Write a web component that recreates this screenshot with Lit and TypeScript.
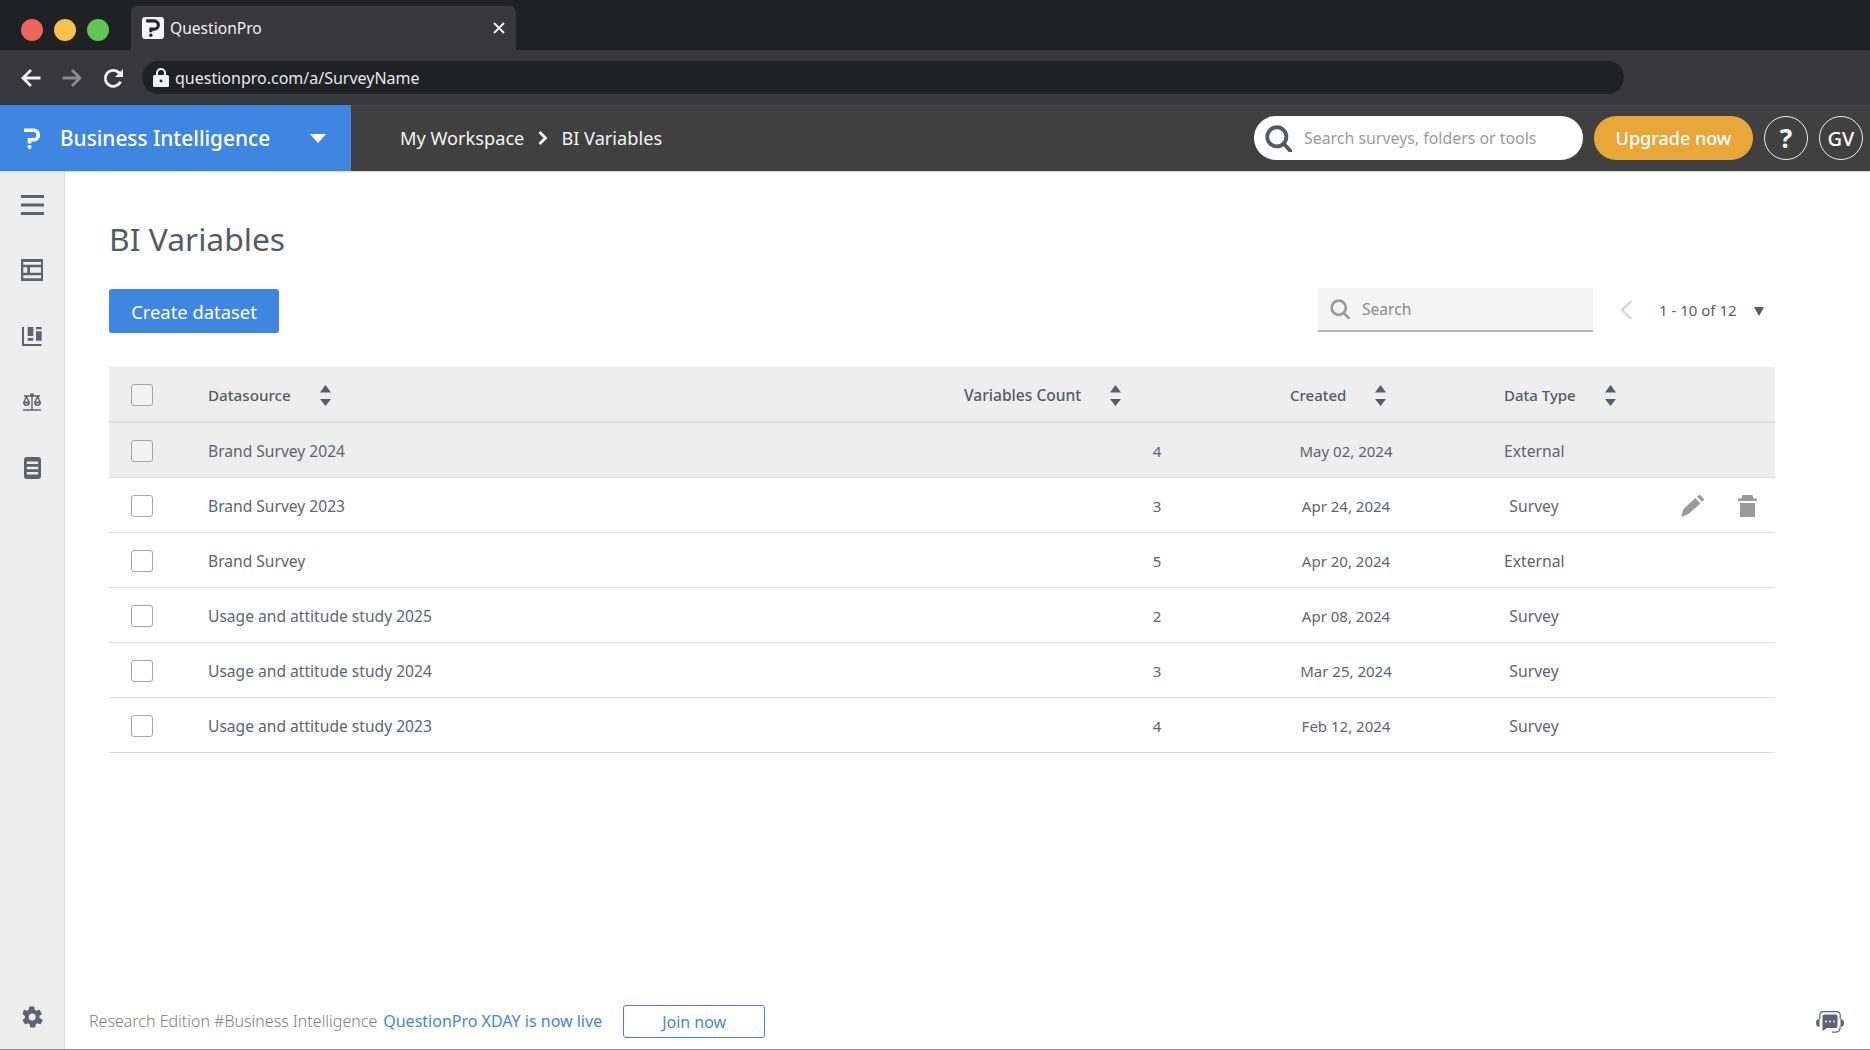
import { LitElement, css, html, svg } from 'lit';
import { customElement } from 'lit/decorators.js';

const rows = [
  { name: 'Brand Survey 2024', count: 4, created: 'May 02, 2024', type: 'External', active: true },
  { name: 'Brand Survey 2023', count: 3, created: 'Apr 24, 2024', type: 'Survey', actions: true },
  { name: 'Brand Survey', count: 5, created: 'Apr 20, 2024', type: 'External' },
  { name: 'Usage and attitude study 2025', count: 2, created: 'Apr 08, 2024', type: 'Survey' },
  { name: 'Usage and attitude study 2024', count: 3, created: 'Mar 25, 2024', type: 'Survey' },
  { name: 'Usage and attitude study 2023', count: 4, created: 'Feb 12, 2024', type: 'Survey' },
];

const sortIcon = html`<svg class="sort" width="11" height="21" viewBox="0 0 11 21">
  <path d="M5.5 0 11 7.5H0zM0 14h11l-5.5 7z" fill="#555f6c"/>
</svg>`;

const logoPath = svg`<path d="M0 2.200h9.500a4.800 4.800 0 0 1 0 9.600H5.500V15.500" fill="none" stroke="currentColor" stroke-width="3.600"/>
  <circle cx="5.500" cy="19" r="2" fill="currentColor"/>`;

const searchIcon = (size: number, color: string, sw: number) => html`<svg width=${size} height=${size} viewBox="0 0 24 24">
  <circle cx="10.5" cy="10.5" r="8.5" fill="none" stroke=${color} stroke-width=${sw}/>
  <path d="M16.5 16.5 22.5 23" stroke=${color} stroke-width=${sw} stroke-linecap="round"/>
</svg>`;

@customElement('app-root')
export class AppRoot extends LitElement {
  static styles = css`
    :host {
      display: flex;
      flex-direction: column;
      width: 1870px;
      height: 1050px;
      font-family: "Noto Sans", sans-serif;
      color: #5c6570;
      background: #fff;
      overflow: hidden;
    }
    svg { display: block; flex: none; }

    .tabs {
      height: 50px;
      background: #202124;
      display: flex;
      align-items: flex-end;
      padding-left: 21px;
      box-sizing: border-box;
    }
    .dots {
      display: flex;
      gap: 11px;
      align-self: flex-start;
      margin-top: 19px;
    }
    .dot { width: 22px; height: 22px; border-radius: 50%; }
    .tab {
      margin-left: 22px;
      width: 385px;
      height: 44px;
      background: #37373c;
      border-radius: 6px 6px 0 0;
      display: flex;
      align-items: center;
      padding: 0 9px 0 11px;
      box-sizing: border-box;
      color: #f0f0f0;
      font-size: 15.6px;
      gap: 6px;
    }
    .favicon {
      width: 22px;
      height: 22px;
      background: #f6f6f6;
      color: #26272b;
      border-radius: 3px;
      display: flex;
      align-items: center;
      justify-content: center;
    }
    .tab .close { margin-left: auto; margin-right: 2px; }

    .toolbar {
      height: 55px;
      background: #37373c;
      display: flex;
      align-items: center;
      padding-left: 21px;
    }
    .nav { display: flex; align-items: center; gap: 21px; margin-top: 1px; }
    .url {
      margin-left: 18px;
      width: 1482px;
      height: 33px;
      border-radius: 17px;
      background: #202124;
      display: flex;
      align-items: center;
      padding-left: 11px;
      box-sizing: border-box;
      gap: 6px;
      color: #e8e8e8;
      font-size: 16px;
    }

    .topbar {
      height: 67px;
      background: #404040;
      display: flex;
      align-items: center;
      color: #f4f4f4;
      border-bottom: 1px solid #d8d8d8;
      box-sizing: border-box;
    }
    .product {
      width: 351px;
      height: 100%;
      background: #3f86e0;
      display: flex;
      align-items: center;
      padding-left: 24px;
      box-sizing: border-box;
      color: #fff;
    }
    .product .name { margin-left: 20px; font-size: 20.8px; font-weight: 500; }
    .product .caret { margin-left: 40px; }
    .crumbs {
      margin-left: 49px;
      display: flex;
      align-items: center;
      font-size: 18.2px;
    }
    .crumbs svg { margin: 0 14px; }
    .top-right {
      margin-left: auto;
      display: flex;
      align-items: center;
      padding-right: 7px;
    }
    .global-search {
      width: 329px;
      height: 44px;
      background: #fff;
      border-radius: 22px;
      display: flex;
      align-items: center;
      padding-left: 11px;
      box-sizing: border-box;
      gap: 12px;
      color: #9a9a9a;
      font-size: 15.9px;
      margin-right: 11px;
    }
    .upgrade {
      width: 159px;
      height: 44px;
      border-radius: 22px;
      background: #e9a73a;
      color: #fff;
      font-size: 18px;
      font-weight: 500;
      display: flex;
      align-items: center;
      justify-content: center;
      margin-right: 11px;
    }
    .round {
      width: 44px;
      height: 44px;
      border-radius: 50%;
      border: 1.5px solid #eee;
      box-sizing: border-box;
      display: flex;
      align-items: center;
      justify-content: center;
      font-size: 20px;
      font-weight: 500;
      color: #fff;
    }
    .round.help { font-size: 26px; font-weight: 700; }
    .round + .round { margin-left: 11px; }

    .main {
      flex: 1;
      display: flex;
      min-height: 0;
      border-bottom: 1px solid #8c8c8c;
    }
    .sidebar {
      width: 65px;
      background: #eee;
      border-right: 1px solid #dcdcdc;
      box-sizing: border-box;
      display: flex;
      flex-direction: column;
      align-items: center;
      padding-bottom: 20px;
      flex: none;
    }
    .side-item {
      height: 66px;
      display: flex;
      align-items: center;
      justify-content: center;
    }
    .side-item:first-child { height: 65px; }
    .gear { margin-top: auto; }

    .content { flex: 1; min-width: 0; display: flex; flex-direction: column; }
    .body { flex: 1; padding: 47px 95px 0 44px; }
    h1 {
      margin: 0;
      font-size: 31.8px;
      line-height: 40px;
      font-weight: 400;
      color: #525c69;
    }
    .actions-row {
      margin-top: 29px;
      height: 45px;
      display: flex;
      align-items: flex-start;
    }
    .create {
      margin-top: 1px;
      width: 170px;
      height: 44px;
      border-radius: 3px;
      background: #3f86e0;
      color: #fff;
      font-size: 18.4px;
      display: flex;
      align-items: center;
      justify-content: center;
    }
    .table-search {
      margin-left: auto;
      width: 275px;
      height: 44px;
      background: #f4f4f4;
      border-bottom: 2px solid #b5b5b5;
      box-sizing: border-box;
      display: flex;
      align-items: center;
      padding-left: 12px;
      gap: 12px;
      color: #8b8b8b;
      font-size: 15.6px;
    }
    .pager {
      width: 182px;
      height: 44px;
      box-sizing: border-box;
      display: flex;
      align-items: center;
      padding-left: 27px;
      font-size: 15px;
      color: #555f6c;
    }
    .pager .count { margin-left: 26px; }
    .pager .more { margin-left: 17px; margin-top: 3px; }

    .table { margin-top: 34px; }
    .row {
      display: grid;
      grid-template-columns: 99px 756px 326px 214px 156px 1fr;
      align-items: center;
      height: 55px;
      padding-top: 2px;
      border-bottom: 1.5px solid #dedede;
      box-sizing: border-box;
      font-size: 15.6px;
      color: #5c6570;
    }
    .row.head {
      height: 56px;
      background: #eee;
      font-weight: 500;
      font-size: 15.2px;
      border-bottom-width: 2px;
      color: #525c69;
    }
    .row.head .th-wide { font-size: 15.6px; }
    .row.head .th-fit { font-size: 15px; }
    .row.active { background: #eee; }
    .check {
      width: 22px;
      height: 22px;
      margin-left: 22px;
      border: 1.5px solid #a6a6a6;
      border-radius: 3px;
      background: #fff;
      box-sizing: border-box;
    }
    .row.head .check, .row.active .check { background: #f2f2f2; }
    .th { display: flex; align-items: center; gap: 29px; }
    .num { padding-left: 186px; width: 14px; text-align: center; font-size: 15px; }
    .date { width: 112px; text-align: center; white-space: nowrap; font-size: 15px; }
    .kind { width: 60px; text-align: center; font-size: 15.7px; }
    .icons {
      display: flex;
      align-items: center;
      gap: 34px;
      padding-left: 21px;
    }

    .footer {
      height: 44px;
      display: flex;
      align-items: flex-start;
      padding: 0 26px 0 24px;
      font-size: 16px;
      color: #7d7d7d;
      font-weight: 300;
      flex: none;
    }
    .footer .note { line-height: 33px; white-space: nowrap; }
    .footer a { margin-left: 6px; line-height: 33px; color: #3f86e0; font-weight: 400; white-space: nowrap; }
    .join {
      margin-left: 21px;
      width: 142px;
      height: 33px;
      border: 1.5px solid #3f86e0;
      border-radius: 3px;
      box-sizing: border-box;
      color: #3f86e0;
      display: flex;
      align-items: center;
      justify-content: center;
      font-weight: 400;
    }
    .chat { margin-left: auto; margin-top: 6px; }
  `;

  render() {
    return html`
      <div class="tabs">
        <div class="dots">
          <div class="dot" style="background:#ec6559"></div>
          <div class="dot" style="background:#f5c14e"></div>
          <div class="dot" style="background:#62c554"></div>
        </div>
        <div class="tab">
          <div class="favicon"><svg width="14" height="18" viewBox="0 0 16 21">${logoPath}</svg></div>
          <span>QuestionPro</span>
          <svg class="close" width="12" height="12" viewBox="0 0 12 12"><path d="M1 1l10 10M11 1 1 11" stroke="#f4f4f4" stroke-width="1.8"/></svg>
        </div>
      </div>

      <div class="toolbar">
        <div class="nav">
          <svg width="20" height="20" viewBox="0 0 20 20"><path d="M19.5 10H2M10 2l-8 8 8 8" fill="none" stroke="#f2f2f2" stroke-width="2.8"/></svg>
          <svg width="20" height="20" viewBox="0 0 20 20"><path d="M.5 10H18M10 2l8 8-8 8" fill="none" stroke="#8c8c8c" stroke-width="2.8"/></svg>
          <svg width="21" height="21" viewBox="0 0 21 21"><path d="M17.6 13.6A8 8 0 1 1 15.7 4.4L18 6.5" fill="none" stroke="#f2f2f2" stroke-width="2.8"/><path d="M20 1v8h-8z" fill="#f2f2f2"/></svg>
        </div>
        <div class="url">
          <svg width="16" height="19" viewBox="0 0 16 19">
            <path d="M4 8V5a4 4 0 0 1 8 0v3" fill="none" stroke="#f2f2f2" stroke-width="2"/>
            <rect y="7" width="16" height="12" rx="1.5" fill="#f2f2f2"/>
            <circle cx="8" cy="13" r="1.4" fill="#202124"/>
          </svg>
          <span>questionpro.com/a/SurveyName</span>
        </div>
      </div>

      <div class="topbar">
        <div class="product">
          <svg width="16" height="21" viewBox="0 0 16 21">${logoPath}</svg>
          <span class="name">Business Intelligence</span>
          <svg class="caret" width="16" height="9" viewBox="0 0 16 9"><path d="M0 0h16L8 9z" fill="#fff"/></svg>
        </div>
        <div class="crumbs">
          <span>My Workspace</span>
          <svg width="9" height="14" viewBox="0 0 9 14"><path d="M1.5 1l6 6-6 6" fill="none" stroke="#f4f4f4" stroke-width="2.800"/></svg>
          <span>BI Variables</span>
        </div>
        <div class="top-right">
          <div class="global-search">${searchIcon(27, '#505a68', 3.4)}<span>Search surveys, folders or tools</span></div>
          <div class="upgrade">Upgrade now</div>
          <div class="round help">?</div>
          <div class="round">GV</div>
        </div>
      </div>

      <div class="main">
        <nav class="sidebar">
          <div class="side-item">
            <svg width="23" height="20" viewBox="0 0 23 20"><path d="M0 1.5h23M0 10h23M0 18.5h23" stroke="#5b6470" stroke-width="3"/></svg>
          </div>
          <div class="side-item">
            <svg width="22" height="22" viewBox="0 0 22 22">
              <rect width="22" height="22" fill="#5b6470"/>
              <path fill="#eee" d="M2.300 3h17.700v2.700H2.300zM2.300 8.300h4v5.400h-4zM9 8.300h11v5.400H9zM2.300 16.300h17.700v3H2.300z"/>
            </svg>
          </div>
          <div class="side-item">
            <svg width="20" height="19" viewBox="0 0 20 19">
              <path fill="#5b6470" d="M0 0h2v17h17.500v2H0zM5.700 0h5.600v9H5.700zM5.700 11h5.600v2.700H5.700zM14 0h5.700v2.300H14zM14 4.300h5.700v9.400H14z"/>
            </svg>
          </div>
          <div class="side-item">
            <svg width="18" height="18" viewBox="0 0 18 18" fill="none" stroke="#5b6470" stroke-width="1.4">
              <path d="M9 3v13.500M0 17h18M1 3h16"/>
              <circle cx="9" cy="2" r="1.300"/>
              <path d="M3.500 3.500.8 9.500h5.400zM14.500 3.500l-2.700 6h5.400z"/>
              <path d="M.8 9.500a2.700 2.700 0 0 0 5.400 0zM11.800 9.500a2.700 2.700 0 0 0 5.400 0z"/>
            </svg>
          </div>
          <div class="side-item">
            <svg width="17" height="22" viewBox="0 0 17 22">
              <rect width="17" height="22" rx="3" fill="#5b6470"/>
              <path d="M2.800 5.800h11.400M2.800 11h11.400M2.800 16.200h11.400" stroke="#eee" stroke-width="2.600"/>
            </svg>
          </div>
          <div class="gear">
            <svg width="24" height="24" viewBox="0 0 24 24"><path fill="#5b6470" d="M19.400 13a7.600 7.600 0 0 0 0-2l2.200-1.700a.5.500 0 0 0 .1-.7l-2.100-3.600a.5.500 0 0 0-.6-.2l-2.600 1a7.600 7.600 0 0 0-1.700-1l-.4-2.800a.5.500 0 0 0-.5-.4h-4.200a.5.500 0 0 0-.5.400l-.4 2.800a7.600 7.600 0 0 0-1.700 1l-2.600-1a.5.500 0 0 0-.6.200L2.700 8.600a.5.500 0 0 0 .1.700L5 11a7.600 7.600 0 0 0 0 2l-2.200 1.700a.5.500 0 0 0-.1.700l2.100 3.600c.1.200.4.300.6.200l2.600-1a7.600 7.600 0 0 0 1.700 1l.4 2.800c0 .2.300.4.500.4h4.200c.2 0 .5-.2.500-.4l.4-2.800a7.600 7.600 0 0 0 1.700-1l2.600 1c.2.100.5 0 .6-.2l2.100-3.600a.5.500 0 0 0-.1-.7zM12.200 15.500a3.500 3.500 0 1 1 0-7 3.500 3.500 0 0 1 0 7z"/></svg>
          </div>
        </nav>

        <div class="content">
          <div class="body">
            <h1>BI Variables</h1>
            <div class="actions-row">
              <div class="create">Create dataset</div>
              <div class="table-search">${searchIcon(20, '#9a9a9a', 3.2)}<span>Search</span></div>
              <div class="pager">
                <svg width="13" height="20" viewBox="0 0 13 20"><path d="M11.500 1 2 10l9.500 9" fill="none" stroke="#d5d5d5" stroke-width="2.400"/></svg>
                <span class="count">1 - 10 of 12</span>
                <svg class="more" width="10" height="9" viewBox="0 0 10 9"><path d="M0 0h10L5 9z" fill="#555f6c"/></svg>
              </div>
            </div>

            <div class="table">
              <div class="row head">
                <div class="check"></div>
                <div class="th">Datasource ${sortIcon}</div>
                <div class="th th-wide">Variables Count ${sortIcon}</div>
                <div class="th th-fit">Created ${sortIcon}</div>
                <div class="th th-fit">Data Type ${sortIcon}</div>
                <div></div>
              </div>
              ${rows.map(r => html`
                <div class="row ${r.active ? 'active' : ''}">
                  <div class="check"></div>
                  <div>${r.name}</div>
                  <div class="num">${r.count}</div>
                  <div class="date">${r.created}</div>
                  <div class="kind">${r.type}</div>
                  <div class="icons">
                    ${r.actions ? html`
                      <svg width="23" height="22" viewBox="0 0 23 22"><path d="M0 22l2.500-8L14.500 3l5 5.500-12 10.500zM16 1.800l1.500-1.400a1.500 1.500 0 0 1 2 0l3 3a1.500 1.500 0 0 1 0 2L21 6.800z" fill="#9a9a9a"/></svg>
                      <svg width="19" height="22" viewBox="0 0 19 22"><path d="M4.500 0h10l1 3.500H19V6H0V3.500h3.500zM2 8h15v14H2z" fill="#9a9a9a"/></svg>
                    ` : ''}
                  </div>
                </div>
              `)}
            </div>
          </div>

          <div class="footer">
            <span class="note">Research Edition #Business Intelligence</span>
            <a>QuestionPro XDAY is now live</a>
            <div class="join">Join now</div>
            <svg class="chat" width="28" height="22" viewBox="0 0 28 22">
              <path d="M3.500 8v8C1.500 16 0 14.500 0 12s1.500-4 3.500-4zM24.500 8v8c2 0 3.500-1.500 3.500-4s-1.500-4-3.500-4z" fill="#5b6470"/>
              <path d="M3.800 8V4A3.500 3.500 0 0 1 7.300.7h13.400A3.500 3.500 0 0 1 24.200 4v4M24.200 16c0 3.500-2 5.200-4.700 5.200H16" fill="none" stroke="#5b6470" stroke-width="1.200"/>
              <path d="M8.500 3.500h11a2 2 0 0 1 2 2V15a2 2 0 0 1-2 2H11l-4.500 3V5.500a2 2 0 0 1 2-2z" fill="#5b6470"/>
              <circle cx="10" cy="10.500" r="1" fill="#eee"/><circle cx="14" cy="10.500" r="1" fill="#eee"/><circle cx="18" cy="10.500" r="1" fill="#eee"/>
            </svg>
          </div>
        </div>
      </div>
    `;
  }
}
